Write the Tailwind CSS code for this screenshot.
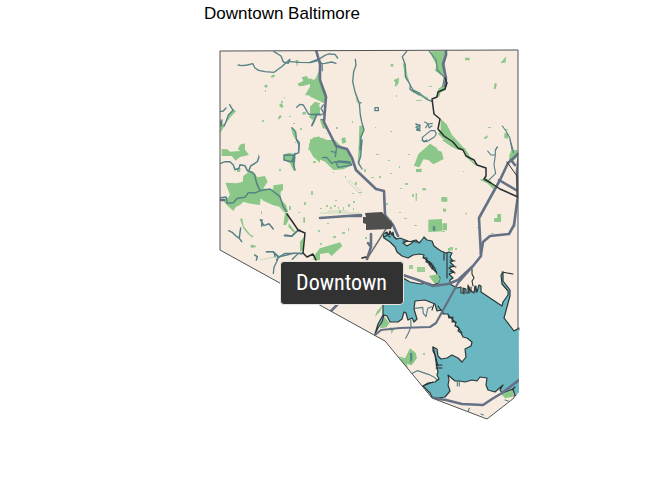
<!DOCTYPE html>
<html lang="en">
<head>
<meta charset="utf-8">
<meta name="viewport" content="width=device-width, initial-scale=1">
<title>Downtown Baltimore</title>
<script src="https://cdn.jsdelivr.net/npm/@tailwindcss/browser@4"></script>
</head>
<body class="bg-white">
<main class="w-full overflow-hidden">
<h1 class="h-7 pt-1 pl-[204px] font-['Liberation_Sans',Arial,sans-serif] text-[17px] leading-5 text-black">Downtown Baltimore</h1>
<div class="relative w-full">
<svg class="block h-auto w-full" viewBox="0 28 672 452" role="img" aria-label="Map of Baltimore with Downtown highlighted" fill="none" stroke-linejoin="round" stroke-linecap="round">
<defs><clipPath id="city"><path d="M220 51L518 50L519 392L514 398L487 419L432 398L385 341L374 335L220 250Z"/></clipPath></defs>
<path fill="#f7ebe0" d="M220 51L518 50L518 392L514 398L487 419L432 398L385 341L374 335L220 250Z"/>
<g clip-path="url(#city)">
<!-- parks -->
<g fill="#8bc788">
<path transform="translate(210 40) scale(.33333)" d="M330 83L318 113L300 140L285 165L305 168L318 178L330 180ZM262 132L280 122L275 112L290 108L296 116L306 118L303 131L283 137L268 139ZM70 206L78 214L60 233L48 250L31 280L31 255L45 250L52 230ZM30 235L36 250L32 266ZM330 200L318 195L314 205L300 208L304 222L296 230L308 240L322 225L330 220ZM85 325L90 314L103 310L104 330H84ZM181 111L188 104L196 105L190 113ZM162 138L168 133L174 139L168 144ZM207 196L214 189L221 199L215 204ZM204 234L210 224L215 230L206 239ZM277 217L287 215L288 223L279 225ZM257 60L264 60L262 82L258 70ZM242 262L252 268L260 286L258 300L250 288ZM330 293L310 292L298 310L295 330H330Z"/>
<path transform="translate(310 40) scale(.33333)" d="M0 115L12 120L25 108L35 130L48 155L52 175L42 190L30 184L12 175L0 170ZM0 200L15 185L30 190L22 210L5 222L0 220ZM30 240L42 240L48 268L38 264ZM0 298L35 293L65 305L78 330H0ZM94 295L105 292L109 307L97 311ZM251 120L267 113L266 128L259 139H254L256 128ZM241 73L250 72L249 80L243 80ZM278 70L286 70L292 105L298 125L288 120L283 95ZM300 145L330 160V168L305 155ZM133 145L142 180L147 192L140 185ZM148 258L158 256L162 272L150 310L154 330L146 325Z"/>
<path transform="translate(410 40) scale(.33333)" d="M62 34L110 33L105 70L108 110L98 108L75 92L80 75L66 50ZM86 145L108 132L108 150L92 157L88 170L78 170ZM165 53H179V61H165ZM289 49L286 68L271 69ZM254 129L261 131L257 147H251ZM10 150L30 163L55 173L52 180L20 163ZM92 236L110 253L126 285L160 322V330H145L125 320L84 282L92 270ZM48 325L60 311L82 325V330H46ZM221 293L233 286V292L226 298ZM283 280L294 280L295 296L283 294Z"/>
<path transform="translate(210 140) scale(.33333)" d="M35 27L52 28L60 35L88 33L105 10L104 27L117 45L90 51L77 62L65 48H35ZM296 25L302 5L320 -10H330V68L310 50ZM80 85L92 85L90 96L82 96ZM98 125L100 108L120 93L132 97L142 112L165 108L173 125L160 145L178 148L190 148V136L219 132V150L212 155V178L228 195L234 215L222 217L208 200L188 195L160 182L152 174L150 195L115 190L100 185L90 195L78 200L70 213L48 193L38 180L55 172L60 164L46 128L80 130ZM224 42L238 38L253 42L257 53L252 95L240 70L221 60ZM225 217L235 220L236 240L228 255L220 255ZM90 236L97 236L101 258L120 283L130 288L127 293L112 280L100 265ZM121 315H132L140 321L124 324ZM237 250L255 274L250 277L235 260ZM280 232H285V248H280ZM270 305L282 290L279 330L270 335ZM310 350L330 325V360H310Z"/>
<path transform="translate(310 140) scale(.33333)" d="M0 0H75L95 20L115 35L128 75L100 88L70 90L45 65L10 50L0 30ZM148 0H158L152 45L147 80L143 65ZM321 68L330 55V80L312 77ZM30 325L90 307L97 318L65 348L55 338L30 342L12 360L20 340Z"/>
<path transform="translate(410 140) scale(.33333)" d="M25 42L60 12L68 25L95 35L101 57L85 65L70 73L55 60L40 58L28 82L12 77ZM18 87L35 86V96H18ZM95 0H125L132 12L165 25L190 65L205 75L195 76L170 52L155 25L125 20ZM208 119L230 115L255 137L250 148L232 130ZM55 239L96 237V274L55 276ZM97 250H111V271H97ZM94 171L112 172V185H94ZM99 205L108 207V215H100ZM36 145L48 145V151H37ZM252 235L262 234V222H273V246L252 245ZM298 45L305 30H322V50L308 65L297 70ZM17 160L21 160L20 183H17ZM113 325L128 322L129 331L115 332ZM166 217L171 219L168 226ZM310 245H316V260H310Z"/>
<path transform="translate(360 290) scale(.33333)" d="M70 43L60 65L45 80L50 65ZM74 80L88 100L80 112L60 115L65 95ZM90 110L102 118L95 132ZM115 210L138 205L150 178L165 188L170 205L155 225L140 222L145 235L125 220Z"/>
<path transform="translate(380 330) scale(.33333)" d="M55 78L75 85L90 55L108 70L110 85L95 105L80 98L82 110ZM362 190L400 180L398 200L375 205Z"/>
</g>
<g fill="#9bcf95"><path d="M265 90h1v2h-1zM281 101h2v2h-2zM284 97h1v1h-1zM262 120h2v2h-2zM289 116h2v1h-2zM300 128h2v2h-2zM293 123h2v1h-2zM295 142h1v1h-1zM326 133h1v1h-1zM336 127h2v2h-2zM352 121h1v2h-1zM375 127h1v1h-1zM390 131h2v1h-2zM396 95h1v2h-1zM416 100h6v1h-6zM429 86h3v1h-3zM258 154h1v2h-1zM279 169h2v2h-2zM261 211h1v3h-1zM304 202h2v3h-2zM311 191h2v4h-2zM313 161h3v2h-3zM298 212h2v1h-2zM289 206h2v4h-2zM318 230h2v2h-2zM339 210h2v3h-2zM355 182h2v3h-2zM353 201h2v2h-2zM345 176h1v2h-1zM333 172h1v1h-1zM364 169h2v3h-2zM371 177h3v1h-3zM379 176h2v2h-2zM376 154h3v1h-3zM405 183h3v2h-3zM400 188h2v1h-2zM412 194h2v3h-2zM404 218h3v1h-3zM399 212h2v1h-2zM320 208h2v1h-2zM327 223h2v1h-2zM342 232h3v2h-3zM348 228h1v3h-1zM333 236h3v2h-3zM320 243h2v2h-2zM365 237h2v2h-2zM359 192h3v1h-3zM352 193h2v1h-2zM414 225h3v1h-3zM442 231h3v1h-3zM409 265h4v4h-4zM417 267h8v5h-8zM450 247h3v3h-3zM455 248h2v2h-2zM463 171h1v1h-1zM423 353h2v2h-2zM424 354h1v1h-1zM491 233h3v1h-3zM477 227h1v1h-1zM488 127h3v1h-3zM505 129h3v1h-3zM326 205h2v2h-2zM330 207h2v2h-2zM334 205h2v2h-2zM338 207h1v2h-1zM343 207h1v3h-1zM348 204h2v3h-2zM353 208h1v2h-1zM335 200h2v1h-2zM386 203h2v2h-2zM390 173h2v1h-2zM399 166h1v2h-1zM388 160h2v1h-2zM408 154h2v1h-2z"/><path stroke="#9bcf95" stroke-width=".6" stroke-dasharray="1 1" d="M347 181L361 195M349 180L361 191M320 213H360M328 211H348M260 260L280 256"/></g>
<!-- streams -->
<g stroke="#568287" stroke-width="1.3">
<path transform="translate(210 40) scale(.33333)" stroke-width="4" d="M85 75L95 77L112 75L128 71L135 84L146 91L165 95L192 97L215 80L240 58L235 70L220 66L213 48L192 35M240 65L270 67L300 68L330 60M260 202L270 193L280 195L288 209L295 222L306 224L330 222M320 225L312 245L306 257M32 214L40 213L48 204M59 194L69 211L55 225L48 245L42 259M32 245L34 258L36 240M246 263L257 275L259 297L268 308L266 330"/>
<path transform="translate(310 40) scale(.33333)" stroke-width="4" d="M0 67L30 55L45 46L55 42L75 43L83 54M25 60L36 71L45 70L65 66L78 70M36 71L37 92M136 58L138 75L131 95L128 125L135 155L148 190L153 188M148 190L151 225L155 245L162 270L153 290L150 330M290 34L277 50L286 75L286 110L301 135L300 148L330 165M0 223L15 223L32 225L42 220M20 225L12 240L5 257M40 195L33 205L42 220M33 238L40 240M195 203H205V212H195ZM318 252L328 257M318 262L328 267M320 270L330 272"/>
<path transform="translate(410 40) scale(.33333)" stroke-width="3.5" d="M58 34L78 60L82 90L103 112L98 140M0 135L10 150L30 160L50 178L68 185M277 258L288 273L300 295L306 330M257 330L262 321M40 290L62 272L75 272L79 282L73 291L50 305L38 302L37 292ZM44 246L55 252L67 250M47 263L55 251L57 264L66 257M18 252L28 256M19 258L29 262M20 268L29 272L30 254"/>
<path transform="translate(210 140) scale(.33333)" stroke-width="4.5" d="M32 70L45 65L60 65L70 75L75 89L87 85L90 74L105 77L112 92L125 96L134 105L140 130L150 152L180 147L210 170L220 200L230 215M116 93L122 78L142 65L147 50M150 152L138 158L115 158L105 172L82 175L70 188L52 190L48 171L32 173M260 0L267 15L266 38L248 46L222 45L222 60L245 65L255 40L251 75L255 90M250 48L248 65M56 272L68 278L78 288L88 295L95 305M92 264L88 292M151 239L162 257L177 251L190 267M156 239L155 259M169 335L188 335L205 350L200 360M193 340L195 350M223 287L245 289L260 275L270 270M205 351L230 345L250 340L280 340M134 345L142 350L139 360"/>
<path transform="translate(310 140) scale(.33333)" stroke-width="4" d="M64 34L78 38L76 50L80 20M37 53L50 52L65 70L75 65L122 70L125 75L85 82L78 68L85 63L120 66M156 0L152 50L145 68L156 87"/>
<path transform="translate(410 140) scale(.33333)" stroke-width="3.5" d="M233 33L243 45L256 45L256 30L262 21M256 45L252 75L257 100L245 112L237 120M300 0L307 22L310 38M36 0L43 6L50 0M70 260V270M74 260V272"/>
<path transform="translate(260 220) scale(.33333)" stroke-width="4" d="M75 45L95 48L112 32M20 95H40L56 110L50 125L42 142L40 160M56 112L75 100L100 100M97 118L115 100L126 102"/>
<path transform="translate(360 290) scale(.33333)" stroke-width="3.5" d="M165 55L188 52L190 70L198 80L203 55L215 50M152 90L153 110L145 130L137 145M152 190V215"/>
<path transform="translate(380 330) scale(.33333)" stroke-width="3.5" d="M95 70V90M97 130L112 122L145 133L160 140L172 150M232 155V168M238 155V168M268 235L264 245M303 252L310 255M375 210L385 213"/>
</g>
<!-- water -->
<path fill="#6ab7c1" stroke="#2b393b" stroke-width="1.2" d="M384 238L383 234L387 232L389 235L390 231L392 235L393 232L394 237L397 239L400 238L408 241L403 243L407 246L412 243L412 241L416 240L419 243L421 241L424 237L427 240L432 241L434 246L438 249L441 251L446 253L449 252L452 253L450 257L453 261L450 262L454 266L449 268L454 272L449 274L453 278L450 280L450 284L457 288L461 287L461 293L463 293V288L466 289L466 293H468V285L470 290L474 293L475 286L477 292L479 285L481 286V292L490 298L502 306L503 302L508 295L508 291L502 284L501 275L503 272L503 281L510 290L510 296L504 318L514 331L519 328L525 329V392L515 396L513 389L508 391L502 393L500 390L503 385L495 392L488 390L486 385L487 378L480 377L477 381L472 380L465 382L460 381L455 381L448 375L449 380L448 385L450 391L445 397L438 398L432 397L430 393L423 386L428 383L435 382L439 379L437 375L438 372L437 368L436 362L435 355L433 351V347L437 349L438 356L441 359L447 358L452 355L458 358L462 362L466 357L465 349L471 346L472 342L467 338L463 337L461 333L458 331L459 328L455 326L456 322L452 322L453 317L449 318L448 314L443 314L442 310L437 311L435 304L430 302L425 300L415 301L414 309L417 319L414 322L412 318L408 320L406 313L404 312L402 319L398 322L390 322L387 316L384 315L382 322L378 328L375 334L378 324L383 315L383 300L384 278L403 278L410 282L420 284L428 283L433 285L438 283L440 278L437 274L435 269L432 269L433 265L429 265L430 262L426 262L427 258L423 258L424 255L420 254L413 255L408 258L402 256L397 252L395 247L390 242Z"/>
<path fill="#8bc788" d="M429 276L438 274L440 279L438 283L434 283Z"/>
<g stroke="#2b2f31" stroke-width="1.1">
<path d="M384 237L390 234M386 233L390 237M390 232L396 239M403 241L417 242M424 258L432 264M427 262L435 268M430 266L436 272M444 253V260M447 253V278M450 260L455 261M450 266L456 267M450 271L455 273M464 289L464 294M469 287V293M471 287V292M476 286V292M473 286L472 281L474 278L472 274V269M502 272L513 274M457 326L462 333M449 316L455 322M438 306L443 313M434 304L432 310M433 347L438 366M436 365H442M436 368H442M423 386L433 382M512 390L515 387"/>
</g>
<!-- highways -->
<g stroke="#647185" stroke-width="2.6">
<path d="M316 50L320 64L320 80L326 97L324 122L336 146L347 149L352 158L356 170L376 189L384 191L385 215L393 225L398 236"/>
<path d="M446 50L446 55L443 64L446 78L445 86"/>
<path d="M519 153L508 163L500 180L479 218L481 256L473 266L458 280L448 284L433 286L418 280L403 275"/>
<path d="M519 155L517 172L518 195L514 225L509 234L490 236L483 242L481 254M499 180L516 190"/>
<path d="M473 266L458 283L436 323L430 327L400 328L381 330L375 335" stroke-width="2.2"/>
<path d="M320 218L361 215M351 216H361M371 234V247L367 259M368 243L371 247"/>
<path d="M330 312L337 305M432 398L446 400L462 404L483 405L492 399L502 393L519 380M219 200H224M511 160L515 165"/>
</g>
<path stroke="#333" stroke-width="1" d="M507 162L517 176V196"/>
<path stroke="#6d7171" stroke-width="1.5" d="M391 221L367 259"/>
<path stroke="#292d2e" stroke-width="1.5" d="M445 78L447 83L445 89L438 92L437 97L432 99L434 114L440 119L438 129L444 136L453 142L458 148L463 150L466 156L474 160L477 165L486 168L486 176L484 179L491 183L500 189L518 197M287 214L294 224L298 230L305 233L303 253L307 257L313 254L316 260M362 258L366 257"/>
<path fill="#4f4f4d" d="M365 213L382 212L386 217L393 224L391 229L366 230V224L363 223V217L366 217Z"/>
</g>
<path stroke="#505354" stroke-width="1" d="M519 328V330M518 328L518 50L220 51L220 250L374 335L385 341L432 398L487 419L514 398V395"/>
</svg>
<div role="tooltip" class="absolute top-[51.5%] left-[41.6%] flex h-11 w-[124px] items-center justify-center rounded-sm border border-[#e8e2dc] bg-[#323232] font-['Roboto_Condensed',Roboto,sans-serif] text-[22px] leading-7 text-white">Downtown</div>
</div>
</main>
</body>
</html>
